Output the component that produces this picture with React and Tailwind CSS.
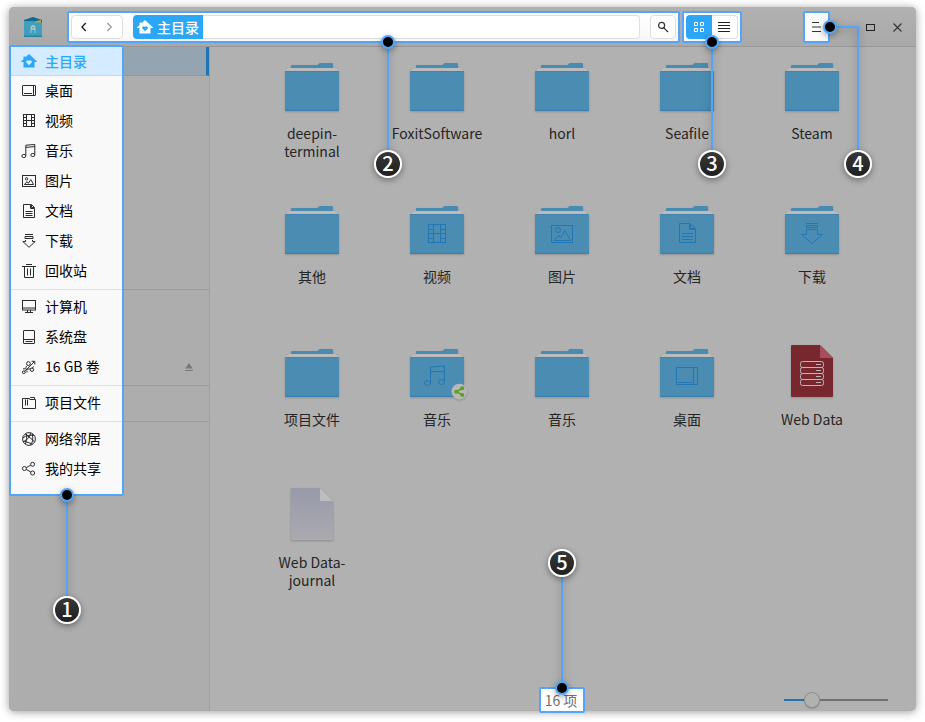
import React from "react";

const FONT = "font-['Noto_Sans_CJK_SC','Noto_Sans',sans-serif]";

function HomeIcon({ heart, className }) {
  return (
    <svg width="16" height="14" viewBox="0 0 16 14" className={className}>
      <path d="M8 0L16 7.6V8H13.5V13.5H2.5V8H0V7.6L2.5 5.2V2.5H4.5V3.3Z" fill="currentColor" />
      <path d="M8 11.2L5.3 8.5A1.45 1.45 0 0 1 8 7A1.45 1.45 0 0 1 10.7 8.5Z" fill={heart} />
    </svg>
  );
}

const glyphs = {
  desktop: (
    <>
      <rect x="0.5" y="1.5" width="13" height="10" rx="0.5" />
      <path d="M11.5 1.5V11.5M2 9.5H10" />
    </>
  ),
  video: (
    <>
      <rect x="1.5" y="0.5" width="11" height="12" />
      <path d="M4.5 0.5V12.5M9.5 0.5V12.5M4.5 6.5H9.5M1.5 3.5H4.5M1.5 6.5H4.5M1.5 9.5H4.5M9.5 3.5H12.5M9.5 6.5H12.5M9.5 9.5H12.5" />
    </>
  ),
  music: (
    <>
      <path d="M3.8 11.5V1.2L12.8 0.5V10.5M3.8 3.4L12.8 2.6" />
      <ellipse cx="1.8" cy="12" rx="2" ry="1.6" />
      <ellipse cx="10.8" cy="11" rx="2" ry="1.6" />
    </>
  ),
  picture: (
    <>
      <rect x="0.5" y="1.5" width="13" height="11" />
      <circle cx="4.6" cy="4.8" r="1.2" />
      <path d="M2.5 10.5L4.9 7.6L6.3 9.3L8.8 5.6L11.6 10.5Z" />
    </>
  ),
  document: (
    <>
      <path d="M1.5 0.5H8.5V4.5H12.5V13.5H1.5ZM9.5 0.5L12.5 3.5H9.5Z" />
      <path d="M3.5 7.5H10.5M3.5 9.5H10.5M3.5 11.5H10.5" />
    </>
  ),
  download: (
    <path d="M3 0.5H11M3 2.5H11V4.5H3ZM3.5 6V7.5H0.8L7 13.3L13.2 7.5H10.5V6" />
  ),
  trash: (
    <path d="M0 2.5H14M4 0.5H10M2.5 2.5V13.5H11.5V2.5M5.5 4.5V11.5M8.5 4.5V11.5" />
  ),
  computer: (
    <>
      <rect x="0.5" y="0.5" width="13" height="9.5" />
      <path d="M0.5 8H13.5M5.5 10V12.5M8.5 10V12.5M3 12.5H11" />
    </>
  ),
  disk: (
    <>
      <rect x="1.5" y="0.5" width="11" height="13" rx="0.5" />
      <path d="M1.5 9.5H12.5M3.5 11.5H10.5" />
    </>
  ),
  usb: (
    <>
      <path d="M2.8 11.4L12.5 1.5M9.5 1.3H12.8V4.5" />
      <path d="M4.3 9.8C3.2 8 4.2 6.4 5.4 5.6M4.8 9.2C6.5 9.2 7.5 9 8.6 8.8M10 8.2L12 6.5" />
      <circle cx="1.8" cy="12.2" r="1.4" />
      <circle cx="6.4" cy="3.6" r="1.9" />
      <circle cx="10" cy="9.7" r="1.7" />
      <path d="M1 8.8H3.4M5 12.5L4.8 10.5" />
    </>
  ),
  project: (
    <path d="M0.5 12.5V2.5H7.5L8.5 1.5H12.5V3.5H13.5V12.5ZM7.5 3.5H12.5M3.5 3.5V9.5M5.5 3.5V9.5" />
  ),
  network: (
    <>
      <circle cx="7" cy="7" r="6.4" />
      <path d="M3.2 2.2C6 4 10 7 12.6 10M0.8 5.8C4 3.5 8 2.8 12 3.4M1 9.8C5 8.5 8 5 8.8 1M3.5 12C4.5 8 5 5 4.5 1.8M8.5 13C10.8 10.5 11.3 7 10.2 2M2.4 9.2L10.5 12" />
    </>
  ),
  share: (
    <>
      <circle cx="2.4" cy="6.5" r="2" />
      <circle cx="10.6" cy="2.3" r="2" />
      <circle cx="10.6" cy="11" r="2" />
      <path d="M4.2 5.6L8.8 3.2M4.2 7.4L8.8 10" />
    </>
  ),
};

function SideIcon({ name }) {
  return (
    <svg width="14" height="14" viewBox="0 0 14 14" overflow="visible" fill="none" stroke="#2b2b2b" strokeWidth="1">
      {glyphs[name]}
    </svg>
  );
}

const groups = [
  [
    ["home", "主目录"],
    ["desktop", "桌面"],
    ["video", "视频"],
    ["music", "音乐"],
    ["picture", "图片"],
    ["document", "文档"],
    ["download", "下载"],
    ["trash", "回收站"],
  ],
  [
    ["computer", "计算机"],
    ["disk", "系统盘"],
    ["usb", "16 GB 卷"],
  ],
  [["project", "项目文件"]],
  [
    ["network", "网络邻居"],
    ["share", "我的共享"],
  ],
];

function SideItem({ icon, label }) {
  if (icon === "home") {
    return (
      <div className="flex h-[29px] items-center border-b border-[#b9dcf6] bg-[#d5ebff] pl-2.5 text-[#2ca7f8]">
        <HomeIcon heart="#d5ebff" />
        <span className="ml-2 pb-px text-sm font-medium leading-none">{label}</span>
      </div>
    );
  }
  return (
    <div className="flex h-[30px] items-center pl-[11px]">
      <SideIcon name={icon} />
      <span className="ml-[9px] whitespace-nowrap pb-0.5 text-sm leading-none text-black">{label}</span>
    </div>
  );
}

function Sidebar() {
  return (
    <aside className="flex w-[201px] shrink-0 rounded-bl-[5px] border-r border-[#9f9f9f] bg-[#adadad]">
      <div className="z-10 -mt-0.5 h-[451px] w-[115px] shrink-0 rounded-[2px] border-2 border-[#51a6fb] bg-[#f9f9f9]">
        {groups.map((group, i) => (
          <div key={i}>
            {i > 0 && <div className="mt-[3px] mb-0.5 h-px bg-[#dedede]" />}
            {group.map(([icon, label]) => (
              <SideItem key={label} icon={icon} label={label} />
            ))}
          </div>
        ))}
      </div>
      <div className="grow">
        {groups.map((group, i) => (
          <div key={i}>
            {i > 0 && <div className="mt-[3px] mb-0.5 h-px bg-[#9d9d9d]" />}
            {group.map(([icon, label]) => (
              <div
                key={label}
                className={
                  icon === "home"
                    ? "h-[29px] border-r-[3px] border-b border-r-[#1f75b1] border-b-[#829cae] bg-[#94a4b1]"
                    : "flex h-[30px] items-center justify-end pr-4"
                }
              >
                {icon === "usb" && (
                  <svg width="8" height="8" viewBox="0 0 8 8" fill="#787878">
                    <path d="M4 0L7.8 5.6H0.2ZM0 7H8V8H0Z" />
                  </svg>
                )}
              </div>
            ))}
          </div>
        ))}
      </div>
    </aside>
  );
}

const folderGlyphs = {
  video: (
    <>
      <rect x="23.5" y="23.5" width="17" height="18" />
      <path d="M28.5 23.5V41.5M35.5 23.5V41.5M28.5 32.5H35.5M23.5 28.5H28.5M23.5 32.5H28.5M23.5 37.5H28.5M35.5 28.5H40.5M35.5 32.5H40.5M35.5 37.5H40.5" />
    </>
  ),
  picture: (
    <>
      <rect x="21.5" y="24.5" width="21" height="17" />
      <circle cx="28" cy="29" r="2.5" />
      <path d="M24 39.5L28.5 34L30.8 37L34.7 29.5L40.5 39.5Z" />
    </>
  ),
  document: (
    <path d="M24.5 22.5H34.5V28.5H40.5V41.5H24.5ZM35.5 22.5L40.5 27.5H35.5ZM27 32.5H38M27 35.5H38M27 38.5H38" />
  ),
  download: (
    <path d="M26 22.5H38M26.5 24.5H37.5V26.5H26.5ZM26.5 28.5H37.5V33.5H42.5L32 42.5L21.5 33.5H26.5Z" />
  ),
  music: (
    <>
      <path d="M25.5 39.5V23L39.5 22V38M25.5 27.7H39.5" />
      <ellipse cx="22.5" cy="39" rx="3" ry="2.5" />
      <ellipse cx="36.5" cy="38" rx="3" ry="2.5" />
    </>
  ),
  desktop: (
    <path d="M21.5 23.5H42.5V40.5H21.5ZM38.5 23.5V40.5M23 38.5H37" />
  ),
};

function FolderIcon({ glyph, shared }) {
  return (
    <svg width="65" height="66" viewBox="0 0 65 66" className="drop-shadow-[0_1px_1px_rgba(0,0,0,0.18)]">
      <path d="M11 10V8Q11 7 12 7H37.5L39 5.5Q39.3 5 40 5H52Q53 5 53 6V10Z" fill="#4a8bb1" />
      <path d="M9 10H55L58.5 13H5.5Z" fill="#bbbbbb" />
      <rect x="5" y="13" width="54" height="40" rx="1" fill="#4b8db2" />
      <path d="M5 51.8H59V52A1 1 0 0 1 58 53H6A1 1 0 0 1 5 52Z" fill="#397fb0" />
      <path d="M5.5 13.5H58.5" stroke="#4382aa" />
      {glyph && (
        <g fill="none" stroke="#2177b3" strokeWidth="1">
          {folderGlyphs[glyph]}
        </g>
      )}
      {shared && (
        <g>
          <circle cx="54.3" cy="47.6" r="7.8" fill="#b8b8b8" />
          <path d="M57.5 44L51.5 47.7L57.5 51" fill="none" stroke="#5f9d25" strokeWidth="1.6" />
          <circle cx="51.2" cy="47.7" r="2" fill="#5f9d25" />
          <circle cx="57.3" cy="44.2" r="2" fill="#5f9d25" />
          <circle cx="57.3" cy="51" r="2" fill="#5f9d25" />
        </g>
      )}
    </svg>
  );
}

function DatabaseFileIcon() {
  return (
    <svg width="65" height="66" viewBox="0 0 65 66" className="drop-shadow-[0_1px_1px_rgba(0,0,0,0.18)]">
      <path d="M11 2Q11 1 12 1H40L53 14V52Q53 53 52 53H12Q11 53 11 52Z" fill="#77282f" />
      <path d="M40 1L53 14H40Z" fill="#a64e5b" />
      <g fill="none" stroke="#bfb4b5">
        <rect x="20.5" y="17.5" width="23" height="6" rx="2" />
        <rect x="20.5" y="23.5" width="23" height="6" rx="2" />
        <rect x="20.5" y="29.5" width="23" height="6" rx="2" />
        <rect x="20.5" y="35.5" width="23" height="6" rx="2" />
        <path d="M36 20.5H41M36 26.5H41M36 32.5H41M36 38.5H41" />
      </g>
    </svg>
  );
}

function BlankFileIcon() {
  return (
    <svg width="65" height="66" viewBox="0 0 65 66" className="drop-shadow-[0_1px_1px_rgba(0,0,0,0.22)]">
      <defs>
        <linearGradient id="paper" x1="0" y1="0" x2="0" y2="1">
          <stop offset="0" stopColor="#989aa9" />
          <stop offset="1" stopColor="#aaa9b0" />
        </linearGradient>
      </defs>
      <path d="M11 1H40L53 14V53H11Z" fill="url(#paper)" />
      <path d="M40 1L53 14H40Z" fill="#bdbdbd" />
    </svg>
  );
}

const files = [
  { label: "deepin-\nterminal" },
  { label: "FoxitSoftware" },
  { label: "horl" },
  { label: "Seafile" },
  { label: "Steam" },
  { label: "其他" },
  { label: "视频", glyph: "video" },
  { label: "图片", glyph: "picture" },
  { label: "文档", glyph: "document" },
  { label: "下载", glyph: "download" },
  { label: "项目文件" },
  { label: "音乐", glyph: "music", shared: true },
  { label: "音乐" },
  { label: "桌面", glyph: "desktop" },
  { label: "Web Data", kind: "database" },
  { label: "Web Data-\njournal", kind: "blank" },
];

function FileItem({ label, kind, glyph, shared }) {
  return (
    <div className="flex h-[143px] flex-col items-center">
      {kind === "database" ? (
        <DatabaseFileIcon />
      ) : kind === "blank" ? (
        <BlankFileIcon />
      ) : (
        <FolderIcon glyph={glyph} shared={shared} />
      )}
      <span className="whitespace-pre pr-px text-center text-sm leading-[18px] text-[#252525]">{label}</span>
    </div>
  );
}

function AppLogo() {
  return (
    <svg width="20" height="22" viewBox="0 0 20 22">
      <path d="M1 4L10 1L19 4V8H1Z" fill="#0e6693" />
      <path d="M11 5.5L18 4V7H9Z" fill="#c3a03c" />
      <path d="M1 5H10L12 6.5H19V21H1Z" fill="#3f9fbd" />
      <path d="M1 19.5H19V21H1Z" fill="#2483a5" />
      <path d="M7.5 17V11.5Q7.5 9 10 9Q12.5 9 12.5 11.5V17H11.5V14H8.5V17Z" fill="#a5c3cb" />
      <circle cx="10" cy="11.7" r="1" fill="#6cafc1" />
    </svg>
  );
}

function Header() {
  return (
    <header className="flex h-10 shrink-0 rounded-t-[5px] border-b border-[#979797] bg-linear-to-b from-[#b1b1b1] to-[#a9a9a9] pt-1 pl-3.5">
      <div className="mt-[5px] h-[22px]">
        <AppLogo />
      </div>
      <div className="ml-6 flex h-8 w-[613px] shrink-0 rounded-[2px] border-2 border-[#51a6fb] bg-linear-to-b from-white to-[#f7f7f7] px-0.5 py-0.5">
        <div className="flex h-6 w-[52px] items-center justify-between rounded border border-[#dfdfdf] bg-white px-[9px]">
          <svg width="7" height="10" viewBox="0 0 7 10" fill="none" stroke="#222" strokeWidth="1.4">
            <path d="M4.8 1L0.9 5L4.8 9" />
          </svg>
          <svg width="7" height="10" viewBox="0 0 7 10" fill="none" stroke="#999" strokeWidth="1.2">
            <path d="M1.3 1L5.3 5L1.3 9" />
          </svg>
        </div>
        <div className="ml-2.5 flex h-6 w-[507px]">
          <div className="flex h-6 w-[70px] shrink-0 items-center rounded-l bg-[#2ca7f8] pl-1 text-white">
            <HomeIcon heart="#2ca7f8" />
            <span className="ml-1 whitespace-nowrap text-sm font-medium leading-none">主目录</span>
          </div>
          <div className="h-6 grow rounded-r border border-l-0 border-[#dfdfdf] bg-white" />
        </div>
        <div className="ml-2.5 flex h-6 w-[26px] items-center justify-center rounded border border-[#dfdfdf] bg-white">
          <svg width="12" height="12" viewBox="0 0 12 12" fill="none" stroke="#303030" strokeWidth="1.2">
            <circle cx="4.6" cy="4.4" r="3" />
            <path d="M6.8 6.8L11 11" />
          </svg>
        </div>
      </div>
      <div className="ml-0.5 flex h-8 w-[60px] shrink-0 rounded-[2px] border-2 border-[#51a6fb] bg-white p-0.5">
        <div className="flex h-6 w-[26px] items-center justify-center rounded-l bg-[#2ca7f8]">
          <svg width="10" height="10" viewBox="0 0 10 10" fill="none" stroke="#fff">
            <path d="M0.5 0.5H3.5V3.5H0.5ZM6.5 0.5H9.5V3.5H6.5ZM0.5 6.5H3.5V9.5H0.5ZM6.5 6.5H9.5V9.5H6.5Z" />
          </svg>
        </div>
        <div className="flex h-6 w-[26px] items-center rounded-r border border-l-0 border-[#dfdfdf] bg-white pl-1.5">
          <svg width="12" height="10" viewBox="0 0 12 10" stroke="#222">
            <path d="M0 0.5H12M0 3.5H12M0 6.5H12M0 9.5H12" />
          </svg>
        </div>
      </div>
      <div className="ml-[61px] flex h-8 w-[27px] shrink-0 items-center rounded-[2px] border-2 border-[#51a6fb] bg-[#fafafa] pl-[7px]">
        <svg width="9" height="10" viewBox="0 0 9 10" stroke="#333">
          <path d="M0 0.5H7M0 5H9M0 9.5H9" />
        </svg>
      </div>
      <div className="ml-9 flex h-8 items-center gap-[18px]">
        <svg width="9" height="7" viewBox="0 0 9 7" fill="none" stroke="#222">
          <rect x="0.5" y="0.5" width="8" height="6" />
        </svg>
        <svg width="9" height="9" viewBox="0 0 9 9" fill="none" stroke="#333" strokeWidth="1.1">
          <path d="M0.5 0.5L8.5 8.5M8.5 0.5L0.5 8.5" />
        </svg>
      </div>
    </header>
  );
}

function Line({ className }) {
  return <div className={`absolute bg-[#51a6fb] shadow-[0_2px_8px_rgba(0,0,0,0.35)] ${className}`} />;
}

function Dot({ className }) {
  return (
    <div
      className={`absolute size-3.5 rounded-full border-2 border-[#51a6fb] bg-black shadow-[0_2px_6px_rgba(0,0,0,0.35)] ${className}`}
    />
  );
}

function Marker({ children, className }) {
  return (
    <div
      className={`absolute flex size-7 items-center justify-center rounded-full border-2 border-white bg-linear-to-b from-[#383838] to-[#202020] pb-0.5 text-xl font-medium leading-none text-white shadow-[0_2px_6px_rgba(0,0,0,0.4)] ${className}`}
    >
      {children}
    </div>
  );
}

function Callouts() {
  return (
    <div className="absolute inset-0 z-20">
      <Line className="top-[495px] left-[66px] h-[105px] w-0.5" />
      <Line className="top-[42px] left-[387px] h-[112px] w-0.5" />
      <Line className="top-[42px] left-[711px] h-[112px] w-0.5" />
      <Line className="top-[26px] left-[857px] h-[128px] w-0.5" />
      <Line className="top-[26px] left-[830px] h-0.5 w-[29px]" />
      <Line className="top-[570px] left-[561px] h-[118px] w-0.5" />
      <Dot className="top-[488px] left-[60px]" />
      <Dot className="top-[35px] left-[381px]" />
      <Dot className="top-[35px] left-[705px]" />
      <Dot className="top-5 left-[823px]" />
      <Dot className="top-[681px] left-[555px]" />
      <Marker className="top-[596px] left-[53px]">1</Marker>
      <Marker className="top-[150px] left-[374px]">2</Marker>
      <Marker className="top-[150px] left-[698px]">3</Marker>
      <Marker className="top-[150px] left-[844px]">4</Marker>
      <Marker className="top-[549px] left-[548px]">5</Marker>
    </div>
  );
}

export default function App() {
  return (
    <div className={`relative h-[722px] w-[925px] overflow-hidden bg-white pt-[7px] pl-[9px] ${FONT}`}>
      <div className="flex h-[704px] w-[907px] flex-col rounded-[5px] bg-[#b1b1b1] shadow-[0_1px_8px_rgba(0,0,0,0.4)]">
        <Header />
        <div className="flex h-[664px]">
          <Sidebar />
          <main className="flex grow flex-col">
            <div className="grid h-[613px] shrink-0 grid-cols-[repeat(5,125px)] content-start pt-[11px] pl-10">
              {files.map((file, i) => (
                <FileItem key={i} {...file} />
              ))}
            </div>
            <footer className="flex h-[51px] pt-[27px] pl-[329px]">
              <div className="flex h-[26px] w-[46px] shrink-0 items-center justify-center rounded-[2px] border-2 border-[#51a6fb] bg-white pr-0.5 text-sm leading-none text-[#707070]">
                16 项
              </div>
              <div className="mt-[5px] ml-[199px] flex h-4 items-center">
                <div className="h-0.5 w-5 bg-[#1f75b1]" />
                <div className="size-4 rounded-full border border-[#8f8f8f] bg-[#b1b1b1] shadow-[0_1px_1px_rgba(0,0,0,0.2)]" />
                <div className="h-0.5 w-[68px] bg-[#707070]" />
              </div>
            </footer>
          </main>
        </div>
      </div>
      <Callouts />
    </div>
  );
}
